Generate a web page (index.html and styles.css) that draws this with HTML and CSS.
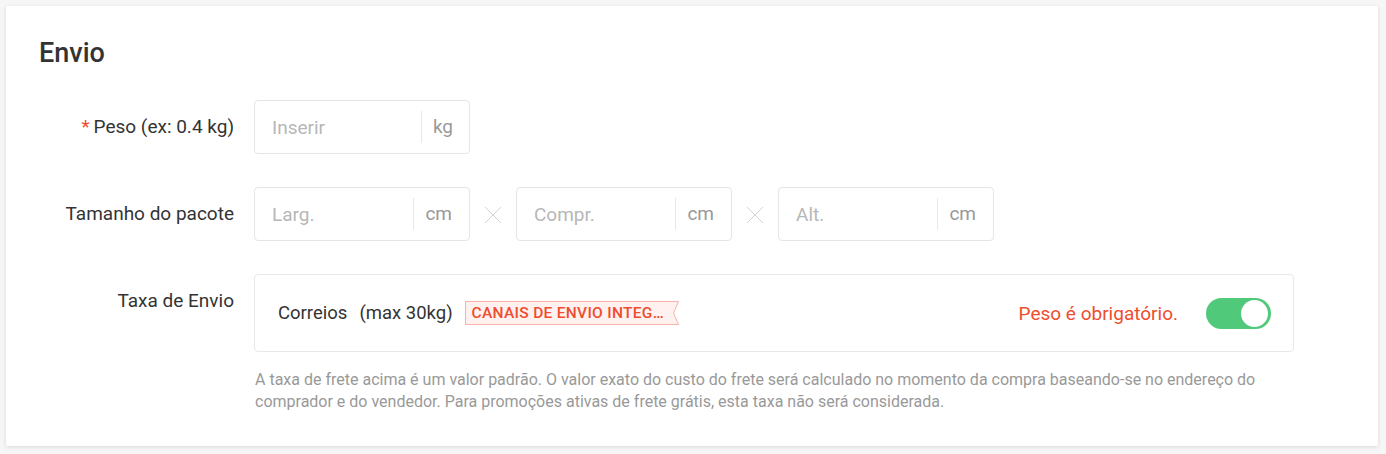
FILE: index.html
```html
<!DOCTYPE html>
<html lang="pt-BR">
<head>
    <meta charset="UTF-8">
    <meta name="viewport" content="width=device-width, initial-scale=1.0">
    <title>Envio</title>
    <link rel="stylesheet" href="styles.css">
</head>
<body>

    <div class="panel">
        <h2 class="panel-title">Envio</h2>

        <!-- Peso -->
        <div class="row">
            <label class="row-label"><span class="req">*</span>Peso (ex: 0.4 kg)</label>
            <div class="row-content">
                <div class="field">
                    <input type="text" placeholder="Inserir">
                    <span class="suffix">kg</span>
                </div>
            </div>
        </div>

        <!-- Tamanho do pacote -->
        <div class="row">
            <label class="row-label">Tamanho do pacote</label>
            <div class="row-content sizes">
                <div class="field">
                    <input type="text" placeholder="Larg.">
                    <span class="suffix">cm</span>
                </div>
                <span class="times">
                    <svg width="18" height="18" viewBox="0 0 18 18"><path d="M1 1L17 17M17 1L1 17" stroke="#d4d4d4" stroke-width="1" fill="none"/></svg>
                </span>
                <div class="field">
                    <input type="text" placeholder="Compr.">
                    <span class="suffix">cm</span>
                </div>
                <span class="times">
                    <svg width="18" height="18" viewBox="0 0 18 18"><path d="M1 1L17 17M17 1L1 17" stroke="#d4d4d4" stroke-width="1" fill="none"/></svg>
                </span>
                <div class="field">
                    <input type="text" placeholder="Alt.">
                    <span class="suffix">cm</span>
                </div>
            </div>
        </div>

        <!-- Taxa de Envio -->
        <div class="row row-top">
            <label class="row-label">Taxa de Envio</label>
            <div class="row-content">
                <div class="channel">
                    <span class="channel-name">Correios</span>
                    <span class="channel-max">(max 30kg)</span>
                    <span class="tag">
                        <span class="tag-text">CANAIS DE ENVIO INTEG…</span>
                        <svg class="tag-end" width="8" height="24" viewBox="0 0 8 24"><path d="M0 0.5H7.5L2.5 12L7.5 23.5H0" fill="#fff1ef" stroke="#f6b3a8" stroke-width="1"/></svg>
                    </span>
                    <span class="channel-error">Peso é obrigatório.</span>
                    <span class="switch"><span class="knob"></span></span>
                </div>
                <p class="note">A taxa de frete acima é um valor padrão. O valor exato do custo do frete será calculado no momento da compra baseando-se no endereço do comprador e do vendedor. Para promoções ativas de frete grátis, esta taxa não será considerada.</p>
            </div>
        </div>
    </div>

</body>
</html>
```

FILE: styles.css
```css
/* General Styles */
body {
    font-family: Roboto, 'Liberation Sans', sans-serif;
    background: #f6f6f6;
    margin: 0;
    padding: 6px 8px 8px 6px;
    color: #333;
}

.panel {
    background: #fff;
    border-radius: 2px;
    box-shadow: 0 1px 4px rgba(0, 0, 0, 0.12);
    padding: 31px 32px 33px 32px;
}

.panel-title {
    margin: 0 0 31px 0;
    font-size: 27px;
    line-height: 32px;
    font-weight: 500;
    color: #333;
    padding-left: 1px;
}

/* Rows */
.row {
    display: flex;
    align-items: center;
    margin-bottom: 33px;
}

.row:last-child {
    margin-bottom: 0;
}

.row-top {
    align-items: flex-start;
}

.row-label {
    width: 196px;
    flex-shrink: 0;
    text-align: right;
    font-size: 19px;
    line-height: 22px;
    color: #333;
    margin-right: 20px;
}

.row-top .row-label {
    padding-top: 16px;
}

.req {
    color: #ee4d2d;
    margin-right: 4px;
}

.row-content {
    flex: 1;
}

/* Inputs */
.field {
    display: flex;
    align-items: center;
    width: 216px;
    height: 54px;
    box-sizing: border-box;
    border: 1px solid #e5e5e5;
    border-radius: 4px;
    padding: 0 16px 0 17px;
    background: #fff;
}

.field input {
    flex: 1;
    min-width: 0;
    border: none;
    outline: none;
    font-family: inherit;
    font-size: 19px;
    color: #333;
    padding: 0;
}

.field input::placeholder {
    color: #b7b7b7;
}

.suffix {
    border-left: 1px solid #e8e8e8;
    padding-left: 11px;
    line-height: 32px;
    font-size: 19px;
    color: #999;
}

.sizes {
    display: flex;
    align-items: center;
}

.sizes .field {
    padding-right: 17px;
}

.times {
    width: 46px;
    display: flex;
    justify-content: center;
    align-items: center;
    padding-top: 2px;
}

/* Shipping channel */
.channel {
    display: flex;
    align-items: center;
    width: 1040px;
    height: 78px;
    box-sizing: border-box;
    border: 1px solid #e8e8e8;
    border-radius: 4px;
    padding: 0 22px 0 23px;
    font-size: 18.5px;
}

.channel-max {
    margin-left: 12px;
}

.tag {
    display: flex;
    align-items: stretch;
    height: 24px;
    margin-left: 12px;
}

.tag-text {
    background: #fff1ef;
    border: 1px solid #f6b3a8;
    border-right: none;
    color: #ee4d2d;
    font-size: 15.5px;
    font-weight: 500;
    line-height: 22px;
    padding: 0 7px 0 6px;
    letter-spacing: 0.3px;
}

.channel-error {
    margin-left: auto;
    color: #ee4d2d;
    font-size: 19px;
    margin-right: 28px;
}

.switch {
    position: relative;
    width: 65px;
    height: 31px;
    border-radius: 16px;
    background: #51c97a;
}

.knob {
    position: absolute;
    top: 2px;
    right: 3px;
    width: 27px;
    height: 27px;
    border-radius: 50%;
    background: #fff;
}

.note {
    margin: 17px 0 0 1px;
    font-size: 16px;
    line-height: 22px;
    color: #999;
    max-width: 1040px;
}
```
